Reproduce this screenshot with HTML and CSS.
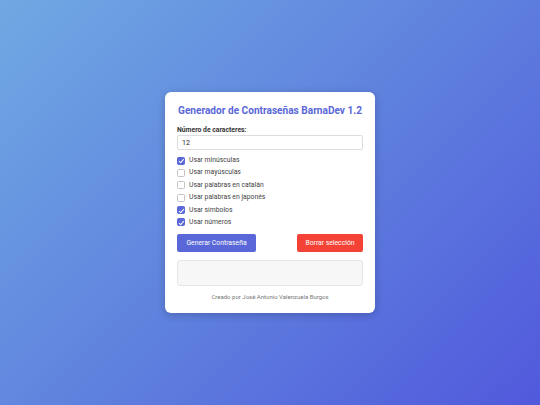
FILE: index.html
```html
<!DOCTYPE html>
<html lang="es">
<head>
    <meta charset="UTF-8" />
    <title>Generador de Contraseñas BarnaDev 1.2</title>
    <link rel="stylesheet" href="styles.css">
</head>
<body>
    <div class="card">
        <h2>Generador de Contraseñas BarnaDev 1.2</h2>

        <label class="field-label" for="length">Número de caracteres:</label>
        <input type="number" id="length" value="12" />

        <div class="options">
            <label class="option"><input type="checkbox" checked> Usar minúsculas</label>
            <label class="option"><input type="checkbox"> Usar mayúsculas</label>
            <label class="option"><input type="checkbox"> Usar palabras en catalán</label>
            <label class="option"><input type="checkbox"> Usar palabras en japonés</label>
            <label class="option"><input type="checkbox" checked> Usar símbolos</label>
            <label class="option"><input type="checkbox" checked> Usar números</label>
        </div>

        <div class="actions">
            <button class="generate-button">Generar Contraseña</button>
            <button class="clear-button">Borrar selección</button>
        </div>

        <div class="result" id="result"></div>

        <p class="footer">Creado por José Antonio Valenzuela Burgos</p>
    </div>
</body>
</html>
```

FILE: styles.css
```css
html, body {
    height: 100%;
}

body {
    margin: 0;
    font-family: Roboto, "Noto Sans", sans-serif;
    background: linear-gradient(135deg, #70a9e3 0%, #5f82de 50%, #5159dc 100%);
    display: flex;
    align-items: center;
    justify-content: center;
}

.card {
    width: 186px;
    padding: 12px;
    background: white;
    border-radius: 6px;
    box-shadow: 0 2px 8px rgba(0,0,0,0.2);
    font-size: 7px;
    line-height: 9px;
}

h2 {
    margin: 0 0 8px;
    font-size: 10.1px;
    line-height: 14px;
    font-weight: 700;
    color: #5a67d8;
    text-align: center;
    white-space: nowrap;
}

.field-label {
    display: block;
    font-size: 6.8px;
    line-height: 9px;
    font-weight: 700;
    color: #333;
}

input[type="number"] {
    display: block;
    box-sizing: border-box;
    width: 100%;
    height: 15px;
    padding: 0 4px;
    font-family: inherit;
    font-size: 7px;
    color: #222;
    border: 1px solid #ddd;
    border-radius: 2px;
    outline: none;
}

.options {
    margin-top: 4px;
}

.option {
    display: flex;
    align-items: center;
    height: 12.4px;
    font-size: 6.8px;
    color: #444;
}

.option input {
    appearance: none;
    box-sizing: border-box;
    position: relative;
    width: 8px;
    height: 8px;
    margin: 0 4px 0 0;
    border: 1px solid #c4c4c4;
    border-radius: 1.5px;
    background: white;
}

    .option input:checked {
        background: #5a67d8;
        border-color: #5a67d8;
    }

    .option input:checked::after {
        content: "";
        position: absolute;
        left: 2px;
        top: 0.5px;
        width: 2px;
        height: 3.5px;
        border: solid white;
        border-width: 0 1px 1px 0;
        transform: rotate(40deg);
    }

.actions {
    display: flex;
    justify-content: space-between;
    margin-top: 5px;
}

button {
    display: block;
    height: 18px;
    padding: 0 6px;
    font-family: inherit;
    font-size: 6.8px;
    color: white;
    border: none;
    border-radius: 2px;
    cursor: pointer;
}

.generate-button {
    width: 79px;
    background-color: #5a67d8;
}

.clear-button {
    width: 66px;
    background-color: #f44336;
}

.result {
    height: 24px;
    margin-top: 8px;
    background: #f7f7f7;
    border: 1px solid #e6e6e6;
    border-radius: 3px;
}

.footer {
    margin: 7px 0 0;
    font-size: 6px;
    line-height: 8px;
    color: #777;
    text-align: center;
}
```
